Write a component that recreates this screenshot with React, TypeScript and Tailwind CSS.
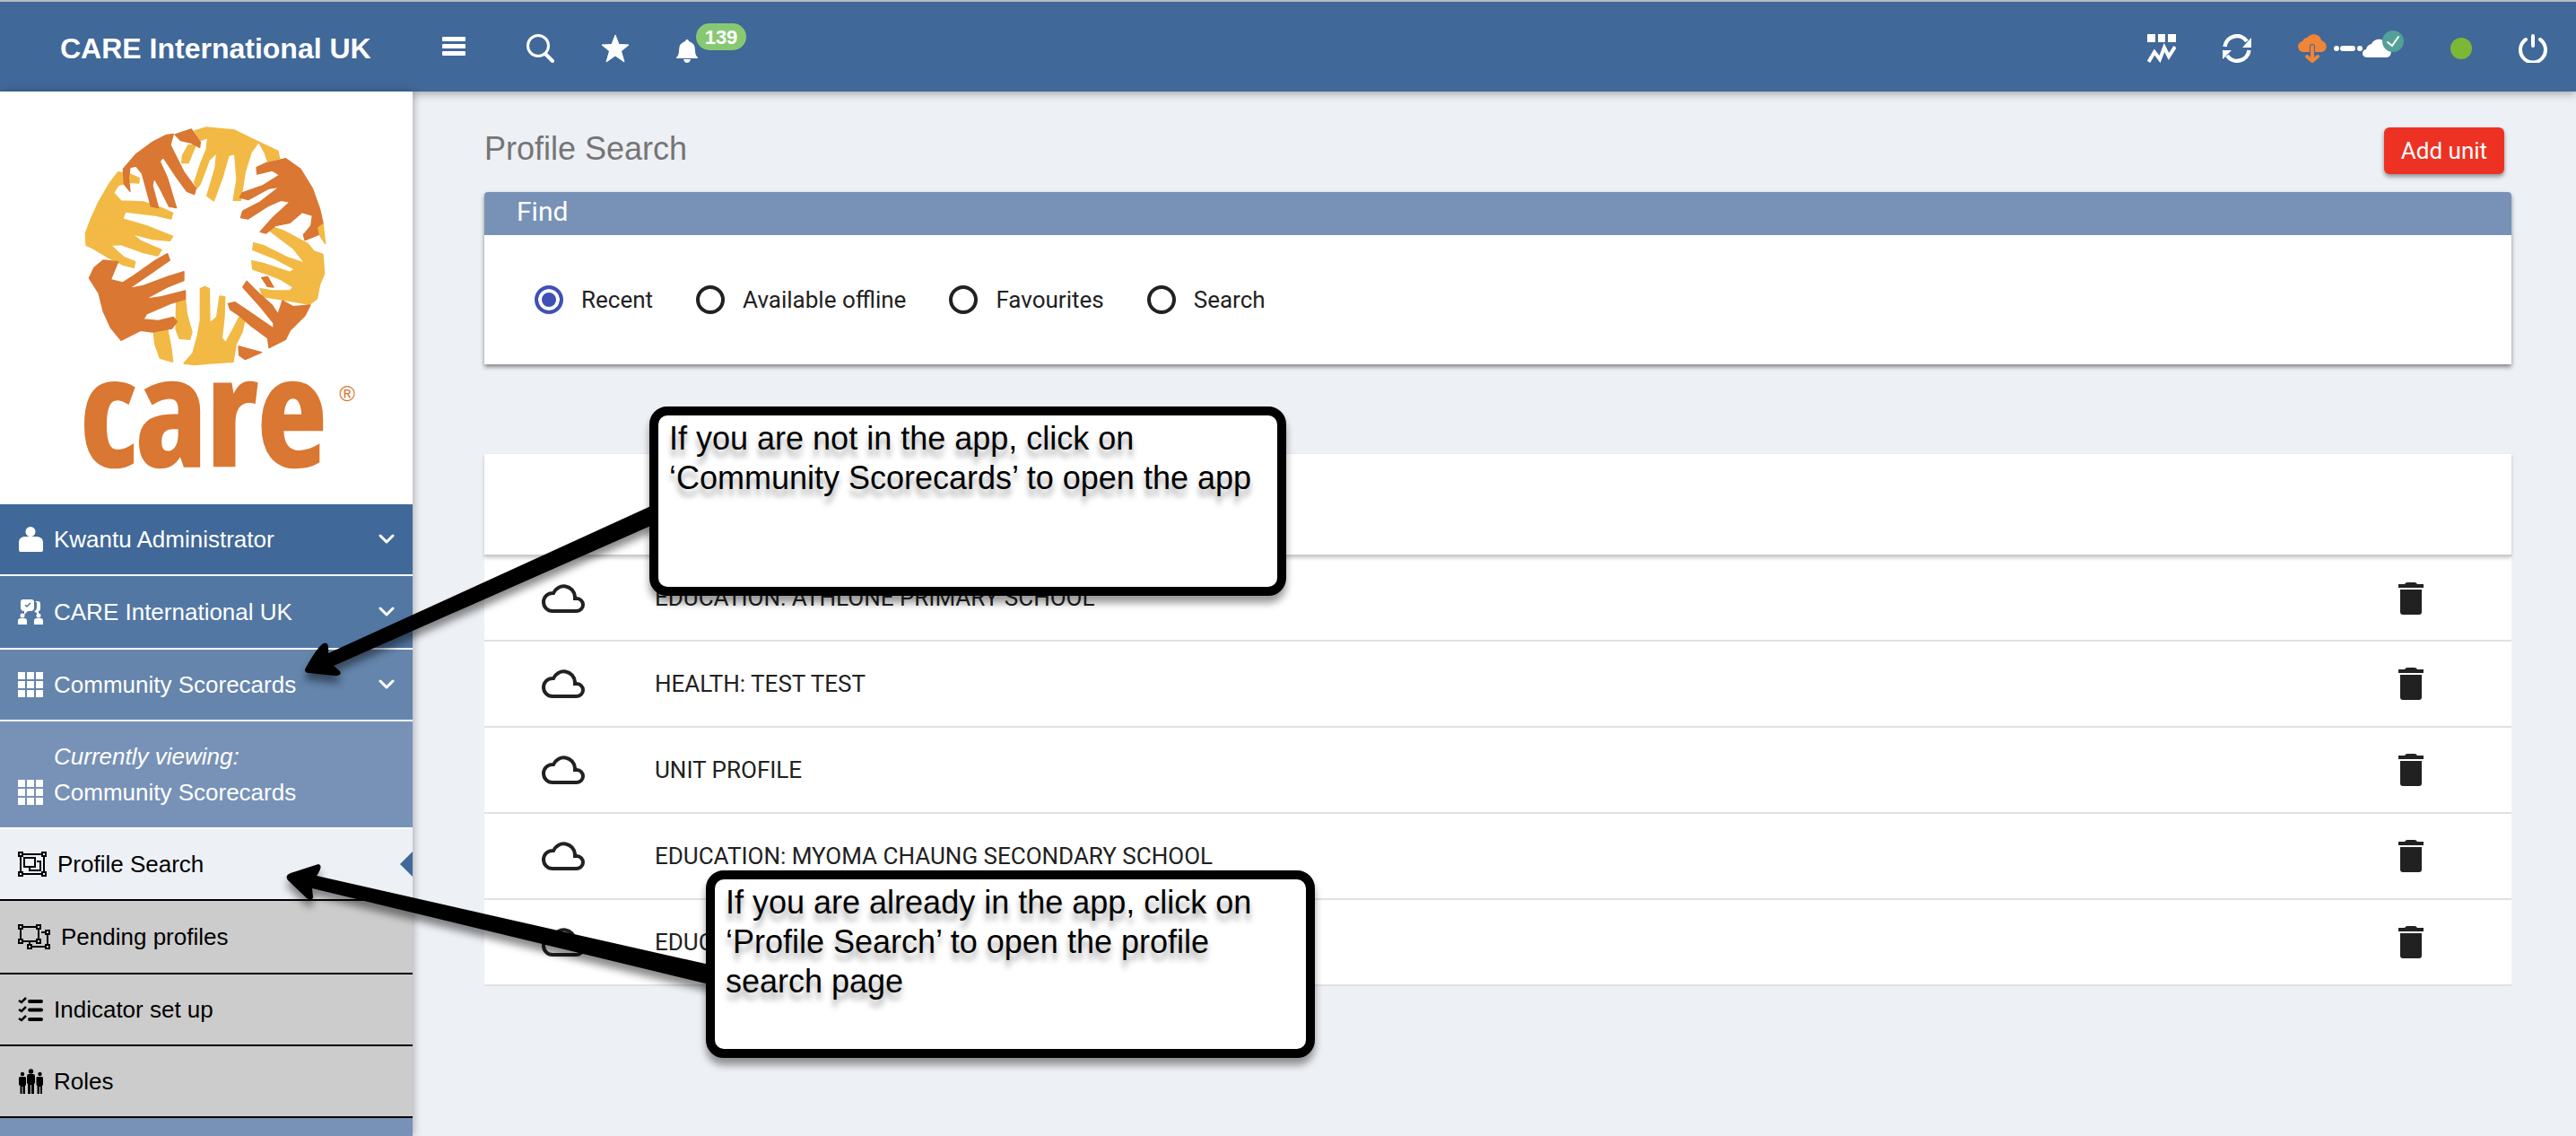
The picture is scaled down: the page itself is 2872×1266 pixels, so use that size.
import React from 'react';

const sans = "font-['Liberation_Sans',Arial,sans-serif]";

const GridIcon = () => (
  <svg viewBox="0 0 28 28" className="size-7" fill="currentColor">
    {[0, 10, 20].map(y => [0, 10, 20].map(x => <rect key={`${x}-${y}`} x={x} y={y} width="8" height="8" />))}
  </svg>
);

const UserIcon = () => (
  <svg viewBox="0 0 28 28" className="size-7" fill="currentColor">
    <circle cx="14" cy="5.5" r="5.5" />
    <path d="M1 26V18C1 13 4 11 8 11H20C25 11 28 13 28 18V26Q28 28 26 28H3Q1 28 1 26Z" />
  </svg>
);

const TeamIcon = () => (
  <svg viewBox="0 0 28 28" className="size-7">
    <g fill="currentColor">
      <path d="M6 0H15Q18 0 18 3V9Q18 13 14 13H11L7 17V13Q3 13 3 9V3Q3 0 6 0Z" />
      <path d="M19 2H22Q25 2 25 5V10Q25 13 23 13V17L18 13Q21 12 21 9V4Q21 3 19 2Z" />
      <circle cx="5" cy="18" r="2.5" />
      <circle cx="23" cy="18" r="2.5" />
      <path d="M0 28V24Q0 21 3 21H7Q10 21 10 24V28ZM18 28V24Q18 21 21 21H25Q28 21 28 24V28Z" />
    </g>
    <path d="M8 6L10 8L14 4" fill="none" stroke="#5277a3" strokeWidth="1.5" />
  </svg>
);

const GroupIcon = () => (
  <svg viewBox="0 0 32 28" className="h-7 w-8" fill="none" stroke="currentColor" strokeWidth="2">
    <path d="M6 3H26M6 25H26M3 6V22M29 6V22M7 7H19V17H7ZM21 11H25V21H13V18" />
    <path d="M1 1H5V5H1ZM27 1H31V5H27ZM1 23H5V27H1ZM27 23H31V27H27Z" />
  </svg>
);

const UngroupIcon = () => (
  <svg viewBox="0 0 36 28" className="h-7 w-9" fill="none" stroke="currentColor" strokeWidth="2">
    <path d="M6 3H20M6 19H20M3 6V16M23 6V16M26 9H30M33 12V22M16 25H30M13 20V22" />
    <path d="M1 1H5V5H1ZM21 1H25V5H21ZM1 17H5V21H1ZM21 17H25V21H21ZM31 7H35V11H31ZM31 23H35V27H31ZM11 23H15V27H11Z" />
  </svg>
);

const ChecklistIcon = () => (
  <svg viewBox="0 0 28 28" className="size-7" fill="none" stroke="currentColor">
    <path d="M1 4L4 6L9 1M1 14L4 16L9 11M1 24L4 26L9 21" strokeWidth="2.5" />
    <path d="M13 5H26M13 14.500H26M13 25H26" strokeWidth="4" strokeLinecap="round" />
  </svg>
);

const RolesIcon = () => (
  <svg viewBox="0 0 28 28" className="size-7" fill="currentColor">
    <circle cx="14.500" cy="3" r="2.700" />
    <path d="M11 6H18L19 8V16L18 17V28H15V18H14V28H11V17L10 16V8Z" />
    <circle cx="5" cy="6" r="2.200" />
    <path d="M2 9H8L9 10V18L8 19V28H5.500V20H4.500V28H2.500V19L1 18V10Z" />
    <circle cx="24.500" cy="6" r="2.200" />
    <path d="M21 9H27L28 10V18L27 19V28H25V20H24V28H21.500V19L20.500 18V10Z" />
  </svg>
);

const Chevron = () => (
  <svg viewBox="0 0 18 12" className="h-3 w-[18px]" fill="none" stroke="currentColor" strokeWidth="3" strokeLinecap="round" strokeLinejoin="round">
    <path d="M2 2L9 9L16 2" />
  </svg>
);

const CloudIcon = () => (
  <svg viewBox="0 0 48 32" className="h-8 w-12" fill="none" stroke="#212121" strokeWidth="4">
    <path d="M12 30A10 10 0 0 1 12 10H13A12.500 12.500 0 0 1 37 14V16H39A7 7 0 0 1 39 30Z" />
  </svg>
);

const TrashIcon = () => (
  <svg viewBox="0 0 28 36" className="h-9 w-7" fill="#212121">
    <path d="M0 2H7Q8 0 10 0H18Q20 0 21 2H28V6H0ZM2 8H26V33Q26 36 23 36H5Q2 36 2 33Z" />
  </svg>
);

const CareLogo = () => (
  <svg viewBox="0 0 1080 1290" className="w-[360px] overflow-visible" role="img" aria-label="care">
    <g fill="#f2b944" stroke="#f2b944" strokeWidth="4" strokeLinejoin="round">
      <path d="M470 78L510 66L605 75L655 100L750 145L755 170L715 180L705 150L685 115L660 150L640 215L625 310L600 310L612 240L605 155L585 160L565 230L535 312L512 295L540 200L545 150L520 175L490 255L478 270L470 250L490 190L510 140L515 100L490 110Z" />
      <path d="M430 160L450 125L475 125L450 185L428 185Z" />
      <path d="M870 395L900 385L908 455L885 420Z" />
      <path d="M720 395L770 412L850 455L870 480L900 490L905 555L890 590L880 640L855 658L810 650L750 640L700 632L690 605L730 612L790 612L800 600L760 575L710 555L665 540L662 512L700 520L790 550L805 540L740 505L665 475L668 452L700 460L780 500L840 520L800 470L720 410Z" />
      <path d="M215 215L250 220L285 235L285 252L250 250L215 260L200 285L225 312L300 315L360 335L398 352L392 372L340 360L240 348L230 372L310 395L398 430L388 445L330 440L262 422L290 445L360 475L348 495L300 485L225 458L190 460L235 500L272 515L268 535L230 525L180 500L130 470L108 460L106 420L125 370L150 315L185 255Z" />
      <path d="M330 715L380 740L392 800L398 850L355 838L338 790Z" />
      <path d="M410 650L440 640L445 690L462 750L455 775L420 772L408 740Z" />
      <path d="M490 605L505 598L520 605L522 720L545 700L555 630L572 632L570 700L562 770L575 785L600 740L620 700L640 705L630 750L610 790L600 850L520 855L470 860L435 855L465 820L480 765L490 710Z" />
    </g>
    <g fill="#d97733" stroke="#d97733" strokeWidth="4" strokeLinejoin="round">
      <path d="M232 205L275 155L330 115L375 92L400 88L390 125L410 165L435 215L475 270L470 290L445 280L405 225L365 165L355 180L380 235L410 335L385 330L355 270L335 235L330 260L350 335L325 330L295 220L275 195L255 200L250 235L255 280L235 255Z" />
      <path d="M405 90L460 72L490 115L488 133L460 118L425 110Z" />
      <path d="M678 200L710 185L775 170L825 205L865 270L890 340L900 385L880 400L885 425L840 443L835 425L860 395L865 360L830 350L790 385L740 395L710 420L690 415L730 370L790 315L760 310L715 330L650 372L625 368L632 345L690 315L755 265L720 270L650 308L622 300L630 285L700 260L755 225L730 210L680 222Z" />
      <path d="M165 510L215 515L190 575L230 585L270 560L340 510L380 488L388 510L330 550L250 605L300 595L380 565L435 548L435 578L380 600L305 640L360 632L440 612L440 640L390 655L310 690L300 708L350 712L400 700L412 715L395 738L330 750L290 745L225 778L190 735L165 680L150 620L118 570L135 535Z" />
      <path d="M583 655L605 650L650 680L735 738L735 720L690 665L632 600L645 580L680 615L730 660L750 690L765 645L800 665L858 660L840 695L790 745L775 775L720 803L715 770L660 730L620 695L590 675Z" />
      <path d="M695 568L715 565L735 600L715 598Z" />
      <path d="M618 798L695 818L640 842L620 828Z" />
    </g>
    <text x="88" y="1198" fill="#d97733" stroke="#d97733" strokeWidth="8" fontSize="504" className="font-['Open_Sans_Condensed','Liberation_Sans_Narrow','Open_Sans',sans-serif] font-bold">care</text>
    <text x="955" y="980" fill="#d97733" fontSize="72" className="font-['Liberation_Sans',Arial,sans-serif]">®</text>
  </svg>
);

const menu = [
  { label: 'Kwantu Administrator', icon: UserIcon, style: 'h-20 bg-[#406898]' },
  { label: 'CARE International UK', icon: TeamIcon, style: 'h-[82px] bg-[#5277a3]' },
  { label: 'Community Scorecards', icon: GridIcon, style: 'h-20 bg-[#6585ac]' },
];

const pages = [
  { label: 'Profile Search', icon: GroupIcon, style: 'h-20 bg-[#edf0f5]', active: true },
  { label: 'Pending profiles', icon: UngroupIcon, style: 'h-[82px] bg-[#cccccc]' },
  { label: 'Indicator set up', icon: ChecklistIcon, style: 'h-20 bg-[#cccccc]' },
  { label: 'Roles', icon: RolesIcon, style: 'h-20 bg-[#cccccc]' },
];

const filters = ['Recent', 'Available offline', 'Favourites', 'Search'];

const units = [
  'EDUCATION: ATHLONE PRIMARY SCHOOL',
  'HEALTH: TEST TEST',
  'UNIT PROFILE',
  'EDUCATION: MYOMA CHAUNG SECONDARY SCHOOL',
  'EDUC',
];

const Header: React.FC = () => (
  <header className="relative z-10 flex h-[102px] items-center border-t-2 border-[#b9bbbd] bg-[#406898] pt-1 pr-8 text-white shadow-[0_2px_10px_rgba(0,0,0,0.35)]">
    <div className={`${sans} w-[460px] pl-[67px] text-[32px] leading-10 font-bold whitespace-nowrap`}>CARE International UK</div>
    <button aria-label="Menu" className="ml-8">
      <svg viewBox="0 0 28 32" className="h-8 w-7" fill="currentColor">
        <rect x="1" y="3" width="26" height="5" rx="1" />
        <rect x="1" y="11" width="26" height="5" rx="1" />
        <rect x="1" y="19" width="26" height="5" rx="1" />
      </svg>
    </button>
    <button aria-label="Search" className="ml-[66px]">
      <svg viewBox="0 0 32 32" className="size-8" fill="none" stroke="currentColor">
        <circle cx="14" cy="13" r="11.500" strokeWidth="3" />
        <path d="M22 22L30 30" strokeWidth="4" strokeLinecap="round" />
      </svg>
    </button>
    <button aria-label="Favourites" className="ml-[52px]">
      <svg viewBox="0 0 32 32" className="size-8" fill="currentColor" stroke="currentColor" strokeLinejoin="round">
        <path d="M16 1L20 11.500L31 12L22.500 19L26 31L16 24L6 31L9.500 19L1 12L12 11.500Z" />
      </svg>
    </button>
    <button aria-label="Notifications" className="relative ml-[52px]">
      <svg viewBox="0 0 24 32" className="h-8 w-6" fill="currentColor">
        <path d="M12 6Q14 6 14 8Q21 10 21 18Q21 24 24 26V27H0V26Q3 24 3 18Q3 10 10 8Q10 6 12 6ZM8 28H16Q15 32 12 32Q9 32 8 28Z" />
      </svg>
      <span className={`${sans} absolute -top-3 left-[22px] flex h-[30px] w-14 items-center justify-center rounded-full bg-[#87c973] text-[22px] font-bold`}>139</span>
    </button>
    <div className="ml-auto flex items-center">
      <button aria-label="Activity">
        <svg viewBox="0 0 32 32" className="size-8">
          <path d="M0 0H9V9H0ZM12 0H20V9H12ZM23 0H32V9H23Z" fill="currentColor" />
          <path d="M1.500 31L8 20L14 28L19 15L24 25L31 14" fill="none" stroke="currentColor" strokeWidth="4" />
        </svg>
      </button>
      <button aria-label="Refresh" className="ml-[52px]">
        <svg viewBox="0 0 32 32" className="size-8">
          <path d="M2.500 14A13.500 13.500 0 0 1 27 8M29.500 18A13.500 13.500 0 0 1 5 24" fill="none" stroke="currentColor" strokeWidth="4.500" />
          <path d="M32 4V15H22ZM0 28V18H10Z" fill="currentColor" />
        </svg>
      </button>
      <div className="ml-[52px] flex items-center">
        <svg viewBox="0 0 32 32" className="size-8">
          <path d="M5 20C-2 18-1 9 5 8Q7 4 10 4C14-2 25-1 26 7C33 9 34 18 27 20Z" fill="#f08437" />
          <path d="M16 14V28M10 24L16 30L22 24" fill="none" stroke="#406898" strokeWidth="6" strokeLinecap="round" />
          <path d="M16 14V28M10 25L16 30L22 25" fill="none" stroke="#f08437" strokeWidth="4" strokeLinecap="round" />
        </svg>
        <svg viewBox="0 0 80 40" className="ml-2 h-10 w-20" fill="currentColor">
          <circle cx="3" cy="20" r="3" />
          <rect x="7" y="17" width="17" height="6" rx="3" />
          <circle cx="29" cy="20" r="3" />
          <path d="M37 30C30 30 31 21 36 21Q37 16 42 15C46 7 57 9 59 16C65 20 66 30 58 30Z" />
          <circle cx="66" cy="12" r="12" fill="#53a098" />
          <path d="M60 13L65 17L72 7" fill="none" stroke="white" strokeWidth="2" strokeLinecap="round" />
        </svg>
      </div>
      <span className="ml-[50px] size-6 rounded-full bg-[#7db736]" />
      <button aria-label="Log out" className="ml-[52px]">
        <svg viewBox="0 0 32 32" className="size-8" fill="none" stroke="currentColor" strokeWidth="4" strokeLinecap="round">
          <path d="M16 2V13M8 6A14 14 0 1 0 24 6" />
        </svg>
      </button>
    </div>
  </header>
);

const Sidebar: React.FC = () => (
  <aside className={`${sans} relative z-20 w-[460px] shrink-0 bg-[#7792b6] text-[26px] text-white shadow-[2px_0_8px_rgba(0,0,0,0.25)]`}>
    <div className="flex h-[460px] items-center justify-center bg-white pt-1.5 pl-5">
      <CareLogo />
    </div>
    {menu.map(({ label, icon: Icon, style }) => (
      <button key={label} className={`${style} flex w-full items-center border-b-2 border-white px-5`}>
        <Icon />
        <span className="ml-3">{label}</span>
        <span className="ml-auto"><Chevron /></span>
      </button>
    ))}
    <div className="flex h-[120px] flex-col justify-center border-b-2 border-white px-5 leading-10">
      <p className="pl-10 italic">Currently viewing:</p>
      <p className="flex items-center gap-3"><GridIcon />Community Scorecards</p>
    </div>
    <nav className="text-black">
      {pages.map(({ label, icon: Icon, style, active }) => (
        <a key={label} href="#" className={`${style} flex items-center gap-3 border-b-2 border-black pl-5`}>
          <Icon />
          {label}
          {active && (
            <svg viewBox="0 0 14 28" className="ml-auto h-7 w-3.5" fill="#406898"><path d="M14 0V28L0 14Z" /></svg>
          )}
        </a>
      ))}
    </nav>
  </aside>
);

const Callouts: React.FC = () => (
  <div className={`${sans} text-[36px] leading-[44px] text-black`}>
    <svg viewBox="0 0 400 210" className="absolute top-[555px] left-[335px] z-30 w-[400px] drop-shadow-[0_8px_4px_rgba(0,0,0,0.45)]">
      <path d="M395 7L31 173Q32 159 26 162Q20 164 6 189Q3 194 9 195L38 198Q47 198 44 193L37 187L395 29Z" />
    </svg>
    <svg viewBox="0 0 490 150" className="absolute top-[955px] left-[315px] z-30 w-[490px] drop-shadow-[0_8px_4px_rgba(0,0,0,0.45)]">
      <path d="M480 121L38 21Q46 9 40 8L9 18Q2 21 6 26L27 46Q33 50 34 45L33 35L480 143Z" />
    </svg>
    <div className="absolute top-[453px] left-[724px] z-30 h-[211px] w-[710px] rounded-[20px] border-[10px] border-black bg-white pt-1 pl-3 shadow-[0_8px_8px_rgba(0,0,0,0.4)]">
      <p className="text-shadow-[0_8px_6px_rgba(0,0,0,0.35)]">If you are not in the app, click on<br />‘Community Scorecards’ to open the app</p>
    </div>
    <div className="absolute top-[970px] left-[787px] z-30 h-[209px] w-[679px] rounded-[20px] border-[10px] border-black bg-white pt-1 pl-3 shadow-[0_8px_8px_rgba(0,0,0,0.4)]">
      <p className="text-shadow-[0_8px_6px_rgba(0,0,0,0.35)]">If you are already in the app, click on<br />‘Profile Search’ to open the profile<br />search page</p>
    </div>
  </div>
);

const App: React.FC = () => {
  return (
    <div className="relative flex min-h-screen flex-col bg-[#edf0f5] font-[Roboto,sans-serif] text-[26px] text-[#212121]">
      <Header />
      <div className="flex grow">
        <Sidebar />
        <main className="min-w-0 grow pr-[72px] pl-20">
          <div className="flex items-start justify-between pt-10 pr-2">
            <h1 className={`${sans} text-[36px] leading-[48px] text-[#757575]`}>Profile Search</h1>
            <button className="h-[52px] w-[134px] rounded-md bg-[#ed3224] text-white shadow-[0_3px_5px_rgba(0,0,0,0.4)]">Add unit</button>
          </div>
          <section className="mt-5 rounded-t bg-white shadow-[0_3px_5px_rgba(0,0,0,0.45)]">
            <h2 className="h-12 rounded-t bg-[#7792b6] pl-9 text-[30px] leading-[44px] text-white">Find</h2>
            <div className="flex h-36 items-center gap-12 pl-14">
              {filters.map((name, i) => (
                <label key={name} className="flex items-center gap-5">
                  <input
                    type="radio"
                    name="filter"
                    defaultChecked={i === 0}
                    className="size-8 appearance-none rounded-full border-4 border-[#212121] checked:border-[#3f51b5] checked:bg-[#3f51b5] checked:shadow-[inset_0_0_0_4px_white]"
                  />
                  {name}
                </label>
              ))}
            </div>
          </section>
          <div className="relative mt-[100px] h-[114px] border-b-2 border-[#cbcccc] bg-white shadow-[0_2px_4px_rgba(0,0,0,0.2)]" />
          <table className="w-full bg-white">
            <tbody>
              {units.map((unit, i) => (
                <tr key={i} className="h-24 border-b-2 border-[#e1e1e1] first:h-[94px]">
                  <td className="w-[190px] pl-16"><CloudIcon /></td>
                  <td>{unit}</td>
                  <td className="w-[126px]">
                    <button aria-label="Delete" className="block"><TrashIcon /></button>
                  </td>
                </tr>
              ))}
            </tbody>
          </table>
        </main>
      </div>
      <Callouts />
    </div>
  );
};

export default App;
